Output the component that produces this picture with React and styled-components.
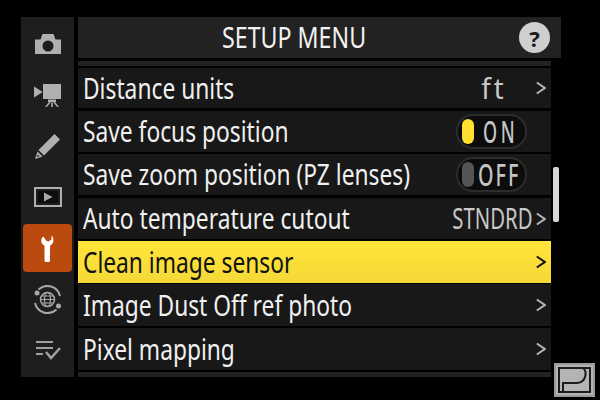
import React from 'react'
import styled, { createGlobalStyle } from 'styled-components'

const Global = createGlobalStyle`
html, body { margin: 0; padding: 0; background: #000; }
#root { width: 600px; height: 400px; overflow: hidden; }
`

const Screen = styled.div`
  position: relative;
  box-sizing: border-box;
  width: 600px;
  height: 400px;
  padding: 17px 39px 23px 21px;
  background: #000;
  display: flex;
  gap: 4px;
  font-family: "Noto Sans", sans-serif;
`

const Sidebar = styled.nav`
  width: 53px;
  background: #1e1e1e;
  display: flex;
  flex-direction: column;
  align-items: center;
  gap: 3px;
  padding-top: 3px;
  box-sizing: border-box;
`

const Tab = styled.div`
  width: 49px;
  height: 48px;
  display: flex;
  align-items: center;
  justify-content: center;
  border-radius: 4px;
  background: ${p => (p.$active ? '#bb4a10' : 'transparent')};
`

const Main = styled.main`
  flex: 1;
  display: flex;
  flex-direction: column;
  min-width: 0;
`

const Header = styled.header`
  height: 41px;
  box-sizing: border-box;
  padding: 0 50px 2px 0;
  background: #222222;
  display: flex;
  align-items: center;
  justify-content: center;
  position: relative;
  color: #f2f2f2;
  font-size: 29px;
`

const Condensed = styled.span`
  display: inline-block;
  white-space: nowrap;
  transform: scaleX(${p => p.$sx || 0.785});
  transform-origin: ${p => p.$origin || 'left'} center;
  letter-spacing: ${p => p.$track || 0}px;
`

const Help = styled.div`
  position: absolute;
  right: 11px;
  top: 5px;
  width: 31px;
  height: 31px;
  border-radius: 50%;
  background: #cfcfcf;
  color: #1a1a1a;
  font-size: 22px;
  font-weight: 700;
  display: flex;
  align-items: center;
  justify-content: center;
`

const Body = styled.div`
  flex: 1;
  display: flex;
  margin-top: 3px;
`

const List = styled.div`
  width: 473px;
  display: flex;
  flex-direction: column;
`

const Strip = styled.div`
  height: ${p => p.$h}px;
  margin-top: ${p => p.$mt || 0}px;
  background: #222222;
`

const Row = styled.div`
  height: ${p => p.$h || 41}px;
  margin-top: ${p => p.$mt ?? 2}px;
  box-sizing: border-box;
  padding: 0 5px;
  display: flex;
  align-items: center;
  font-size: 29px;
  color: ${p => (p.$selected ? '#111' : '#f0f0f0')};
  background: ${p => (p.$selected ? 'linear-gradient(#ffe638, #f5d838)' : '#181818')};
`

const Label = styled.div`
  flex: 1;
  min-width: 0;
  margin-bottom: 2px;
`

const Value = styled.div`
  flex: none;
  display: flex;
  align-items: center;
  justify-content: flex-end;
  width: ${p => p.$w}px;
  margin: 0 ${p => p.$mr || 0}px 2px 0;
  color: #c8c8c8;
`

const Chevron = ({ dark }) => (
  <svg width="10" height="14" viewBox="0 0 10 14" fill="none" stroke={dark ? '#111' : '#b4b4b4'} strokeWidth="2">
    <path d="M.8 1.500 L8.800 7 L.8 12.500" />
  </svg>
)

const Toggle = styled.div`
  flex: none;
  width: 71px;
  height: 35px;
  margin-right: 19px;
  box-sizing: border-box;
  border-radius: 17px;
  background: #0c0c0c;
  border: 2px solid #2c2c2c;
  display: flex;
  align-items: center;
  gap: ${p => p.$gap}px;
  padding-left: 4px;
  color: #c4c4c4;
  font-size: 30px;
  font-weight: 500;
`

const Knob = styled.div`
  flex: none;
  width: 12px;
  height: 25px;
  border-radius: 6px;
  background: ${p => (p.$on ? '#ffdf30' : '#555555')};
`

const Track = styled.div`
  width: 10px;
  padding-top: 106px;
  padding-left: 2px;
  box-sizing: border-box;
`

const Thumb = styled.div`
  width: 6px;
  height: 55px;
  border-radius: 2px;
  background: #d8d8d8;
`

const Badge = styled.svg`
  position: absolute;
  left: 554px;
  top: 363px;
`

const CameraIcon = () => (
  <svg width="26" height="20" viewBox="0 0 26 20" fill="#b0b0b0">
    <path fillRule="evenodd" d="M0 5.500h5.500L7.500 0h11l2 5.500H26V20H0z M13 6.500a5.500 5.500 0 1 0 0 11a5.500 5.500 0 0 0 0-11z" />
  </svg>
)

const MovieIcon = () => (
  <svg width="27" height="23" viewBox="0 0 27 23" fill="#b0b0b0">
    <path d="M0 2.500l8 5v1l-8 5z" />
    <rect x="9" y="0" width="18" height="15" />
    <path d="M14 15.500h8V18h-8z" />
    <path d="M15 18l-4 5h1.800l4-4.500z M21 18l4 5h-1.800l-4-4.500z M17.200 18.500h1.600V23h-1.600z" />
  </svg>
)

const PencilIcon = () => (
  <svg width="25" height="25" viewBox="0 0 25 25" fill="#b0b0b0">
    <path d="M19.500 0L25 5.500L9 21.500L3.500 16z" />
    <path fillRule="evenodd" d="M2.500 17.500L7.500 22.500L0 25z M2.800 20.500L2 23l2.500-.8z" />
  </svg>
)

const PlayIcon = () => (
  <svg width="28" height="20" viewBox="0 0 28 20" fill="none" stroke="#b0b0b0" strokeWidth="2">
    <rect x="1" y="1" width="26" height="18" />
    <rect x="4" y="4" width="20" height="12" fill="#0e0e0e" stroke="none" />
    <path d="M10 5.500l8.500 4.500l-8.500 4.500z" fill="#a8a8a8" stroke="none" />
  </svg>
)

const WrenchIcon = () => (
  <svg width="13" height="27" viewBox="0 0 13 27" fill="#fff">
    <path d="M2.500 1.500C0 3-.5 7 1.500 9C2.500 10 3.500 10.500 3.500 11.500V25.500Q3.500 27 5 27H7.500Q9 27 9 25.500V11.500C9 10.500 10 10 11 9C13 7 13 3 10.500.5L10.500 4.500L7.500 6.500L5 5.500z" />
  </svg>
)

const NetworkIcon = () => (
  <svg width="29" height="29" viewBox="0 0 29 29" fill="none" stroke="#a8a8a8">
    <path d="M5.500 4.500A13 13 0 0 1 27 11" strokeWidth="2" />
    <path d="M23.500 24.500A13 13 0 0 1 2 18" strokeWidth="2" />
    <circle cx="4" cy="8" r="2.500" fill="#a8a8a8" stroke="none" />
    <circle cx="25.500" cy="21" r="2.500" fill="#a8a8a8" stroke="none" />
    <circle cx="14.500" cy="14.500" r="7" strokeWidth="1.500" />
    <ellipse cx="14.500" cy="14.500" rx="3" ry="7" strokeWidth="1.200" />
    <path d="M7.500 14.500h14M8.500 11h12M8.500 18h12" strokeWidth="1.200" />
  </svg>
)

const MyMenuIcon = () => (
  <svg width="26" height="20" viewBox="0 0 26 20" fill="none" stroke="#a0a0a0" strokeWidth="2">
    <path d="M1 2h17M1 8h17M1 14h7" />
    <path d="M11 12l5 6l9-10" strokeWidth="2.500" />
  </svg>
)

const tabs = [
  { icon: <CameraIcon /> },
  { icon: <MovieIcon /> },
  { icon: <PencilIcon /> },
  { icon: <PlayIcon /> },
  { icon: <WrenchIcon />, active: true },
  { icon: <NetworkIcon /> },
  { icon: <MyMenuIcon /> },
]

export default function App() {
  return (
    <Screen>
      <Global />
      <Sidebar>
        {tabs.map((t, i) => (
          <Tab key={i} $active={t.active}>{t.icon}</Tab>
        ))}
      </Sidebar>
      <Main>
        <Header>
          <Condensed $sx={0.8} $origin="center">SETUP MENU</Condensed>
          <Help>?</Help>
        </Header>
        <Body>
          <List>
            <Strip $h={5} />
            <Row $h={40}>
              <Label><Condensed>Distance units</Condensed></Label>
              <Value $w={40} $mr={30}><Condensed $sx={0.95} $track={3} $origin="right">ft</Condensed></Value>
              <Chevron />
            </Row>
            <Row $mt={3}>
              <Label><Condensed>Save focus position</Condensed></Label>
              <Toggle $gap={9}><Knob $on /><Condensed $sx={0.6} $track={6}>ON</Condensed></Toggle>
            </Row>
            <Row>
              <Label><Condensed>Save zoom position (PZ lenses)</Condensed></Label>
              <Toggle $gap={4}><Knob /><Condensed $sx={0.66} $track={3}>OFF</Condensed></Toggle>
            </Row>
            <Row $mt={3}>
              <Label><Condensed>Auto temperature cutout</Condensed></Label>
              <Value $w={80} $mr={4}><Condensed $sx={0.7} $origin="right">STNDRD</Condensed></Value>
              <Chevron />
            </Row>
            <Row $selected $h={42}>
              <Label><Condensed>Clean image sensor</Condensed></Label>
              <Chevron dark />
            </Row>
            <Row $mt={1} $h={42}>
              <Label><Condensed>Image Dust Off ref photo</Condensed></Label>
              <Chevron />
            </Row>
            <Row $h={42}>
              <Label><Condensed>Pixel mapping</Condensed></Label>
              <Chevron />
            </Row>
            <Strip $h={5} $mt={2} />
          </List>
          <Track><Thumb /></Track>
        </Body>
      </Main>
      <Badge width="41" height="34" viewBox="0 0 41 34" fill="none">
        <rect width="41" height="34" fill="#9a9a9a" />
        <rect x="2" y="2" width="37" height="30" fill="#b4b4b4" />
        <rect x="5" y="5" width="31" height="24" stroke="#1c1c1c" strokeWidth="2" />
        <path d="M29 5C33 8 33 19 23 20H9V29" stroke="#1c1c1c" strokeWidth="2" />
      </Badge>
    </Screen>
  )
}
